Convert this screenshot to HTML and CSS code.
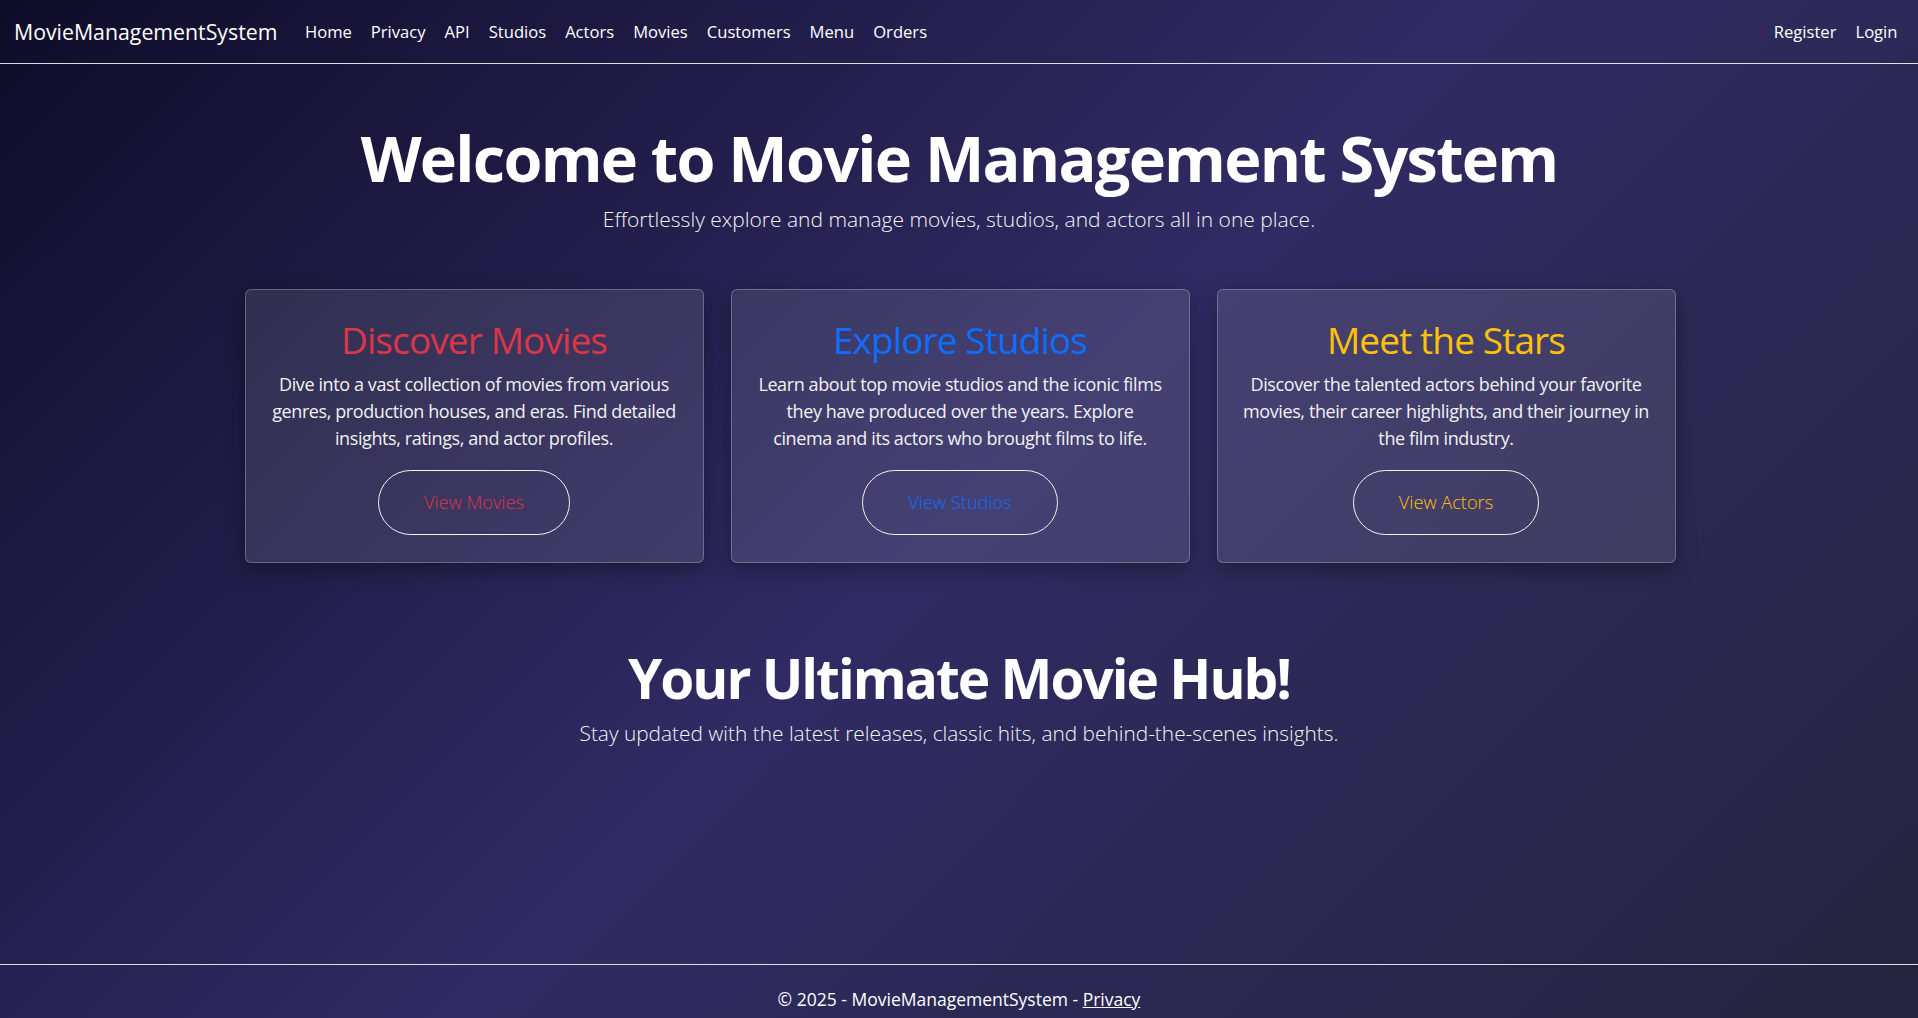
FILE: index.html
```html
<!DOCTYPE html>
<html lang="en">
<head>
<meta charset="utf-8">
<title>Home Page - MovieManagementSystem</title>
<link rel="stylesheet" href="styles.css">
</head>
<body>
<header class="topbar">
  <nav class="navbar">
    <a class="brand" href="#">MovieManagementSystem</a>
    <ul class="nav-main">
      <li><a class="nav-link" href="#">Home</a></li>
      <li><a class="nav-link" href="#">Privacy</a></li>
      <li><a class="nav-link" href="#">API</a></li>
      <li><a class="nav-link" href="#">Studios</a></li>
      <li><a class="nav-link" href="#">Actors</a></li>
      <li><a class="nav-link" href="#">Movies</a></li>
      <li><a class="nav-link" href="#">Customers</a></li>
      <li><a class="nav-link" href="#">Menu</a></li>
      <li><a class="nav-link" href="#">Orders</a></li>
    </ul>
    <ul class="nav-user">
      <li><a class="nav-link" href="#">Register</a></li>
      <li><a class="nav-link" href="#">Login</a></li>
    </ul>
  </nav>
</header>

<main class="page">
  <section class="hero">
    <h1 class="hero-title">Welcome to Movie Management System</h1>
    <p class="lead">Effortlessly explore and manage movies, studios, and actors all in one place.</p>
  </section>

  <section class="cards">
    <div class="card">
      <h2 class="card-title red">Discover Movies</h2>
      <p class="card-text">Dive into a vast collection of movies from various<br>genres, production houses, and eras. Find detailed<br>insights, ratings, and actor profiles.</p>
      <a class="pill red" href="#">View Movies</a>
    </div>
    <div class="card">
      <h2 class="card-title blue">Explore Studios</h2>
      <p class="card-text">Learn about top movie studios and the iconic films<br>they have produced over the years. Explore<br>cinema and its actors who brought films to life.</p>
      <a class="pill blue" href="#">View Studios</a>
    </div>
    <div class="card">
      <h2 class="card-title yellow">Meet the Stars</h2>
      <p class="card-text">Discover the talented actors behind your favorite<br>movies, their career highlights, and their journey in<br>the film industry.</p>
      <a class="pill yellow" href="#">View Actors</a>
    </div>
  </section>

  <section class="hub">
    <h2 class="hub-title">Your Ultimate Movie Hub!</h2>
    <p class="lead hub-lead">Stay updated with the latest releases, classic hits, and behind-the-scenes insights.</p>
  </section>
</main>

<footer class="footer">
  &copy; 2025 - MovieManagementSystem - <a href="#" class="footer-link">Privacy</a>
</footer>
</body>
</html>
```

FILE: styles.css
```css
* { box-sizing: border-box; }

html, body {
  margin: 0;
  padding: 0;
  height: 100%;
}

body {
  min-height: 100vh;
  display: flex;
  flex-direction: column;
  font-family: "Open Sans", "Noto Sans", sans-serif;
  color: #fff;
  background: linear-gradient(135deg, #0f0c29 0%, #302b63 50%, #24243e 100%);
  overflow: hidden;
}

a { text-decoration: none; color: inherit; }

.topbar {
  border-bottom: 1px solid rgba(255, 255, 255, 0.85);
}

.navbar {
  height: 63px;
  display: flex;
  align-items: center;
  padding: 0 11px 0 14px;
}

.brand {
  font-size: 21.3px;
  line-height: 30px;
  color: #fff;
  margin-right: 18px;
}

.nav-main, .nav-user {
  list-style: none;
  margin: 0;
  padding: 0;
  display: flex;
}

.nav-user { margin-left: auto; }

.nav-link {
  display: block;
  padding: 0 9.5px;
  font-size: 16.6px;
  line-height: 24px;
  color: #fff;
}

.page {
  flex: 1;
  display: flex;
  flex-direction: column;
  align-items: center;
}

.hero {
  text-align: center;
  margin-top: 56px;
}

.hero-title {
  margin: 0;
  font-size: 63px;
  font-weight: 700;
  line-height: 1.2;
  letter-spacing: -1.75px;
}

.lead {
  margin: 8px 0 0;
  font-size: 21px;
  font-weight: 300;
  line-height: 30px;
  color: #f4f4f4;
}

.cards {
  display: flex;
  gap: 27px;
  width: 1431px;
  margin: 55px 0 0 2px;
}

.card {
  flex: 1;
  display: flex;
  flex-direction: column;
  align-items: center;
  text-align: center;
  padding: 28px 20px 27px;
  background: rgba(255, 255, 255, 0.1);
  border: 1px solid rgba(255, 255, 255, 0.25);
  border-radius: 6px;
  box-shadow: 0 6px 20px rgba(0, 0, 0, 0.35);
}

.card-title {
  margin: 0;
  font-size: 37px;
  font-weight: 400;
  line-height: 1.2;
  letter-spacing: -0.9px;
}

.card-text {
  margin: 9px 0 0;
  font-size: 18px;
  line-height: 27px;
  color: #f1f1f1;
  letter-spacing: -0.4px;
  white-space: nowrap;
}

.pill {
  margin-top: 18px;
  height: 65px;
  display: flex;
  align-items: center;
  padding: 0 45px;
  border: 1.5px solid #f2f2f2;
  border-radius: 33px;
  font-size: 18.2px;
  font-weight: 300;
}

.red { color: #dc3545; }
.blue { color: #0d6efd; }
.yellow { color: #ffc107; }

.hub {
  text-align: center;
  margin-top: 82px;
}

.hub-title {
  margin: 0;
  font-size: 55px;
  font-weight: 700;
  line-height: 1.2;
  letter-spacing: -2px;
}

.hub-lead {
  margin-top: 7px;
  font-size: 20.85px;
}

.footer {
  border-top: 1px solid rgba(255, 255, 255, 0.85);
  padding: 22px 0 7px;
  text-align: center;
  font-size: 17.5px;
  line-height: 24px;
  color: #fff;
}

.footer-link { text-decoration: underline; }
```
